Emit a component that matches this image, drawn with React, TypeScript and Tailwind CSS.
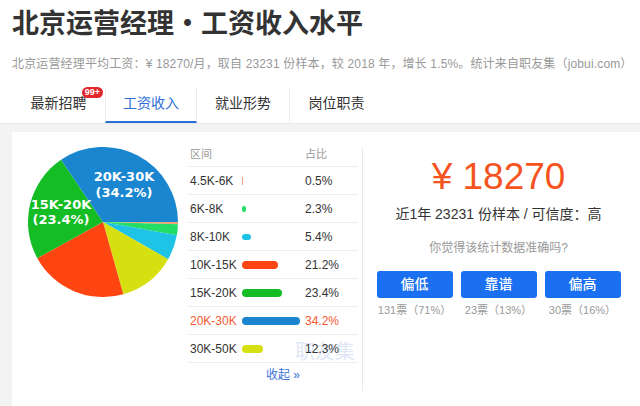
import React from "react";

const slices = [
  { color: "#f0a27a", value: 0.5 },
  { color: "#22dd66", value: 2.3 },
  { color: "#1ec3e6", value: 5.4 },
  { color: "#d6e010", value: 12.3 },
  { color: "#ff4612", value: 21.2 },
  { color: "#14bd24", value: 23.4 },
  { color: "#1a86d0", value: 34.2 },
];

const rows = [
  { range: "4.5K-6K", color: "#f0a27a", w: 1, h: 8, pct: "0.5%" },
  { range: "6K-8K", color: "#22dd66", w: 4, h: 6, pct: "2.3%" },
  { range: "8K-10K", color: "#1ec3e6", w: 9, h: 6, pct: "5.4%" },
  { range: "10K-15K", color: "#ff4612", w: 36, h: 8, pct: "21.2%" },
  { range: "15K-20K", color: "#14bd24", w: 40, h: 8, pct: "23.4%" },
  { range: "20K-30K", color: "#1a86d0", w: 58, h: 8, pct: "34.2%", hot: true },
  { range: "30K-50K", color: "#d6e010", w: 21, h: 8, pct: "12.3%" },
];

const votes = [
  { label: "偏低", count: "131票（71%）" },
  { label: "靠谱", count: "23票（13%）" },
  { label: "偏高", count: "30票（16%）" },
];

function Pie() {
  const cx = 75;
  const cy = 75;
  const r = 75;
  const total = slices.reduce((s, x) => s + x.value, 0);
  let acc = 0;
  return (
    <svg width="150" height="150" viewBox="0 0 150 150" className="shrink-0">
      {slices.map((s, i) => {
        const a0 = (acc / total) * Math.PI * 2;
        acc += s.value;
        const a1 = (acc / total) * Math.PI * 2;
        const large = a1 - a0 > Math.PI ? 1 : 0;
        const d = `M${cx} ${cy} L${cx + r * Math.cos(a0)} ${cy + r * Math.sin(a0)} A${r} ${r} 0 ${large} 1 ${cx + r * Math.cos(a1)} ${cy + r * Math.sin(a1)} Z`;
        return <path key={i} d={d} fill={s.color} />;
      })}
      <g fill="#fff" fontFamily="'DejaVu Sans', sans-serif" fontWeight="bold" fontSize="13" textAnchor="middle">
        <text x="96" y="34">20K-30K</text>
        <text x="96" y="50">(34.2%)</text>
        <text x="33" y="62">15K-20K</text>
        <text x="33" y="77">(23.4%)</text>
      </g>
    </svg>
  );
}

export default function App() {
  return (
    <div className="w-[640px] h-[406px] overflow-hidden bg-white text-[#333] font-['Liberation_Sans','Noto_Sans_CJK_SC',sans-serif]">
      <div className="px-3">
        <h1 className="pt-[6px] text-[27px] leading-[36px] font-bold text-[#333]">北京运营经理・工资收入水平</h1>
        <p className="mt-[14px] text-[12px] leading-[16px] tracking-[0.15px] text-[#999] whitespace-nowrap">
          北京运营经理平均工资：¥ 18270/月，取自 23231 份样本，较 2018 年，增长 1.5%。统计来自职友集（jobui.com）
        </p>

        {/* tabs */}
        <div className="mt-[15px] flex h-[36px] text-[14px]">
          <div className="relative w-[93px] flex items-center justify-center pb-[4px]">
            最新招聘
            <span className="absolute left-[70px] top-0 h-[11px] w-[21px] rounded-full bg-[#e3262b] text-[9px] leading-[11px] font-bold text-white text-center">
              99+
            </span>
          </div>
          <div className="w-[92px] flex items-center justify-center pb-[2px] border-l border-r border-[#ececec] border-b-2 border-b-[#2e6fd7] text-[#2e6fd7]">
            工资收入
          </div>
          <div className="w-[93px] flex items-center justify-center pb-[4px] border-r border-[#ececec]">就业形势</div>
          <div className="w-[93px] flex items-center justify-center pb-[4px]">岗位职责</div>
        </div>
      </div>

      <div className="bg-[#f3f3f3] pt-[8px] pl-[12px] border-t border-[#e8e8e8]">
        <div className="bg-white h-[275px] flex items-start">
          <div className="ml-[16px] mt-[15px]">
            <Pie />
          </div>

          {/* range table */}
          <div className="relative ml-[10px] mt-[10px] w-[170px]">
            <div className="absolute left-[107px] top-[200px] text-[20px] leading-[20px] text-[#dfe7f6] z-0">职友集</div>
            <div className="relative z-10">
              <div className="h-[25px] flex items-center border-b border-[#eeeeee] text-[11px] text-[#999]">
                <span className="w-[54px] pl-[2px]">区间</span>
                <span className="w-[63px]"></span>
                <span>占比</span>
              </div>
              {rows.map((r) => (
                <div
                  key={r.range}
                  className={`h-[28px] flex items-center border-b border-[#eeeeee] text-[12px] ${r.hot ? "text-[#f4592f]" : "text-[#333]"}`}
                >
                  <span className="w-[54px] pl-[2px]">{r.range}</span>
                  <span className="w-[63px] flex items-center">
                    <span className="block rounded-full" style={{ width: r.w, height: r.h, backgroundColor: r.color }} />
                  </span>
                  <span>{r.pct}</span>
                </div>
              ))}
              <div className="h-[24px] flex items-center pl-[78px] text-[12px] text-[#3b73d9]">收起 »</div>
            </div>
          </div>

          <div className="ml-[4px] mt-[15px] w-px h-[244px] bg-[#e9e9e9]" />

          {/* summary */}
          <div className="flex-1 mr-[6px] flex flex-col items-center">
            <div className="mt-[25px] text-[37px] leading-[40px] text-[#f55320]">¥ 18270</div>
            <div className="mt-[7px] text-[14px] leading-[20px] text-[#333]">近1年 23231 份样本 / 可信度：高</div>
            <div className="mt-[16px] text-[12px] leading-[16px] text-[#999]">你觉得该统计数据准确吗?</div>
            <div className="mt-[15px] flex gap-[8px]">
              {votes.map((v) => (
                <div key={v.label} className="w-[76px] flex flex-col items-center">
                  <button className="w-full h-[27px] rounded-[3px] bg-[#1a70f0] text-white text-[14px] font-medium">{v.label}</button>
                  <span className="mt-[4px] text-[11px] leading-[16px] text-[#999] whitespace-nowrap">{v.count}</span>
                </div>
              ))}
            </div>
          </div>
        </div>
      </div>
    </div>
  );
}
